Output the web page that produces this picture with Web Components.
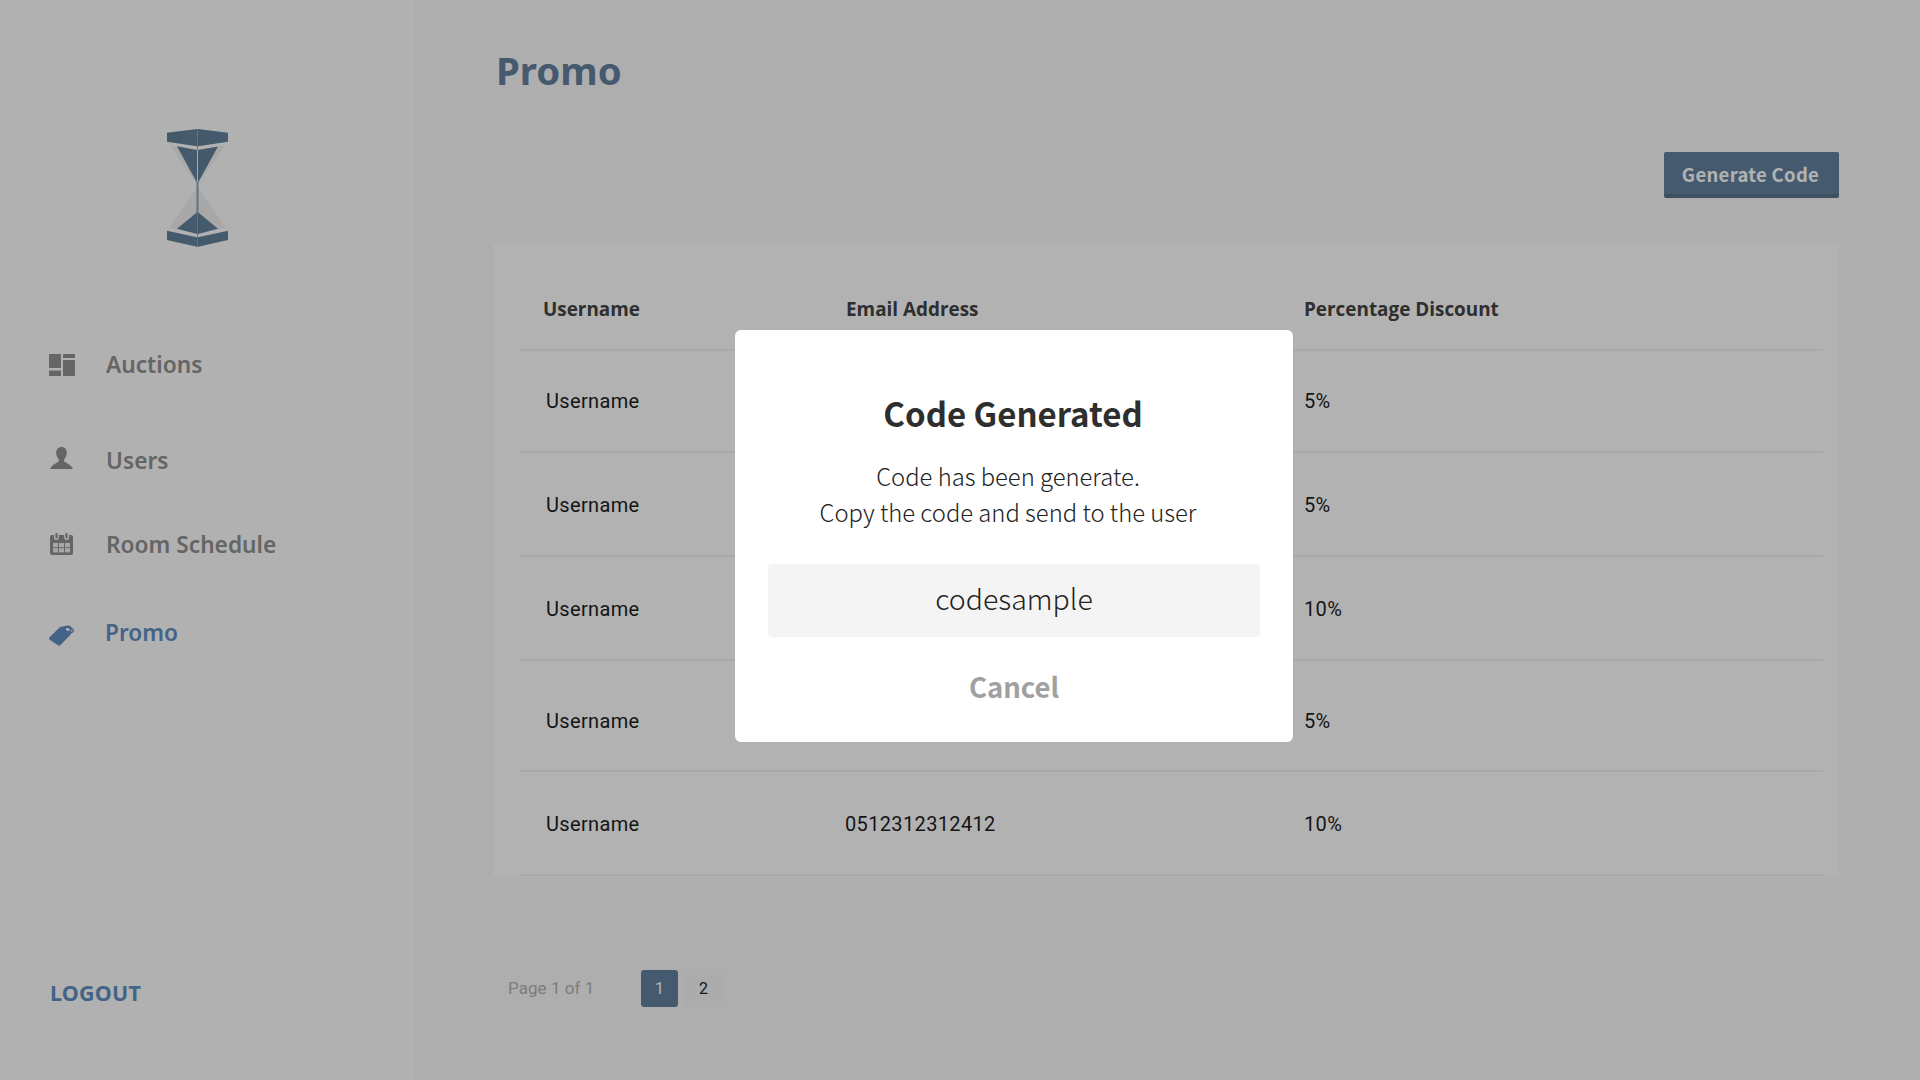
<!DOCTYPE html>
<html><head><meta charset="utf-8">
<style>
html,body{margin:0;padding:0;width:1920px;height:1080px;overflow:hidden;background:#f9f9f9}
body{font-family:"Noto Sans",sans-serif}
</style></head><body>
<promo-app></promo-app>
<template id="t-app"><style>
:host{display:grid;grid-template-columns:414px 1fr;width:1920px;height:1080px;position:relative}
</style><side-bar></side-bar><main-panel></main-panel><code-modal></code-modal></template>

<template id="t-side"><style>
:host{display:flex;flex-direction:column;background:#fefefe;height:1080px;padding:129px 0 0 0;box-sizing:border-box}
.logo{align-self:flex-start;margin-left:167px;height:120px;display:block}
nav{display:flex;flex-direction:column;margin:100px 0 0 49px}
.spacer{flex:1}
.logout{margin:0 0 71px 50px;font:700 21.500px/32px "Noto Sans",sans-serif;color:#6190c2;letter-spacing:.2px}
</style>
<svg class="logo" width="61" height="120" viewBox="0 0 61 120">
<defs><linearGradient id="g" x1="0" x2="1"><stop offset="0" stop-color="#5f8198"/><stop offset="1" stop-color="#66839f"/></linearGradient></defs>
<polygon points="0,12 61,12 30.500,56" fill="#f1f1f1"/>
<polygon points="30.500,58 61,102 0,102" fill="#f1f1f1"/>
<polygon points="0,12.700 30,17.300 31,17.300 61,12.700 61,16 31,21 30,21 0,16" fill="#fefefe"/>
<polygon points="0,98 30,105 31,105 61,98 61,101.700 31,108.300 30,108.300 0,101.700" fill="#fefefe"/>
<polygon points="0,3.700 30,0 30,17.300 0,12.700" fill="url(#g)"/><polygon points="31,0 61,3.700 61,12.700 31,17.300" fill="url(#g)"/>
<polygon points="10,17.300 30,21 30,53.700" fill="url(#g)"/><polygon points="31,21 51,17.500 31,53.700" fill="url(#g)"/>
<rect x="29.500" y="53" width="2" height="31" fill="#8aa4ba"/>
<polygon points="30,83.300 30,105 10,99.700" fill="url(#g)"/><polygon points="31,83.300 51,99.700 31,105" fill="url(#g)"/>
<polygon points="0,101.700 30,108.300 30,117.700 0,111" fill="url(#g)"/><polygon points="31,108.300 61,101.700 61,111 31,117.700" fill="url(#g)"/>
<rect x="30" y="0" width="1" height="21" fill="#8aa4ba"/><rect x="30" y="84" width="1" height="34" fill="#8aa4ba"/>
</svg>
<nav>
<nav-item h="96" label="Auctions"><svg slot="icon" width="26" height="22" viewBox="0 0 26 22" fill="#919191"><path d="M0 0h12v14H0zM0 16.500h12V22H0zM14 0h12v4H14zM14 6h12v16H14z"/></svg></nav-item>
<nav-item h="84" label="Users"><svg slot="icon" style="margin:0 0 6px 1px" width="23" height="22" viewBox="0 0 23 22" fill="#919191"><path d="M11.500 0c3.300 0 5.300 2.300 5.300 5.700 0 2.800-1.200 5-2.600 6.500v2.200c1.800 1.500 6.200 2.500 8.800 7.600H0c2.600-5.100 7-6.100 8.800-7.600v-2.200C7.400 10.700 6.200 8.500 6.200 5.700 6.200 2.300 8.200 0 11.500 0z"/></svg></nav-item>
<nav-item h="88" label="Room Schedule"><svg slot="icon" style="margin:0 0 2px 1px" width="23" height="22" viewBox="0 0 23 22"><path fill="#919191" d="M2 2h2v2.700a2.400 2.400 0 0 0 4.800 0V2h5.400v2.700a2.400 2.400 0 0 0 4.800 0V2h2a2 2 0 0 1 2 2v16a2 2 0 0 1-2 2H2a2 2 0 0 1-2-2V4a2 2 0 0 1 2-2z"/><rect x="5.400" y="0" width="2.200" height="5.600" rx="1.100" fill="#919191"/><rect x="15.400" y="0" width="2.200" height="5.600" rx="1.100" fill="#919191"/><g fill="#f0f0f0"><rect x="3" y="10" width="5" height="4.200"/><rect x="9" y="10" width="5" height="4.200"/><rect x="15" y="10" width="5" height="4.200"/><rect x="3" y="15.200" width="5" height="4.200"/><rect x="9" y="15.200" width="5" height="4.200"/><rect x="15" y="15.200" width="5" height="4.200"/></g></svg></nav-item>
<nav-item h="40" active label="Promo" shift><svg slot="icon" style="margin-top:5px" width="26" height="21" viewBox="0 0 26 21"><path fill="#6190c2" d="M.6 12.300 10.300 2.700c.5-.5 1.100-.8 1.800-.9L18.500.6c2-.3 3.600.8 4.300 2.500l-1 6.300L11.500 19.900c-.9.900-2 1-2.900.2L.6 14.700c-.8-.7-.8-1.600 0-2.400z"/><ellipse cx="20.500" cy="5" rx="3.900" ry="2.300" transform="rotate(20 20.500 5)" fill="none" stroke="#6190c2" stroke-width="1.300"/><ellipse cx="18.800" cy="4.500" rx="2.200" ry="1.300" transform="rotate(20 18.800 4.500)" fill="#fefefe"/></svg></nav-item>
</nav>
<div class="spacer"></div>
<div class="logout">LOGOUT</div></template>

<template id="t-nav"><style>
:host{display:flex;align-items:flex-start;gap:30px}
.i{width:27px;height:32px;display:flex;align-items:center;flex:none}
.l{font:600 22.700px/32px "Noto Sans",sans-serif;color:#919191}
:host([active]) .l{color:#6190c2;margin-left:-1px}
</style><span class="i"><slot name="icon"></slot></span><span class="l"></span></template>

<template id="t-main"><style>
:host{display:flex;flex-direction:column;padding:0 81px 0 82px;background:#f9f9f9;height:1080px;box-sizing:border-box}
h1{margin:44px 0 0;font:700 38.400px/52px "Noto Sans",sans-serif;color:#63829e}
.bar{display:flex;justify-content:flex-end;margin-top:56px;height:46px}
.btn{display:flex;align-items:center;justify-content:center;width:175px;height:46px;box-sizing:border-box;background:#63829e;border-bottom:4px solid #587389;border-radius:2px;color:#fff;font:700 18.500px/24px "Noto Sans CJK JP",sans-serif;letter-spacing:.3px;padding:2px 2px 0 0}
.card{margin:45px 0 0 -3px;background:#fff;padding:0 16px 0 26px;width:1346px;box-sizing:border-box;height:634px}
.pager{display:flex;align-items:center;margin:93px 0 0 12px;gap:7px}
.p{font:400 17px/37px Roboto,sans-serif;color:#b4b4b4;width:126px;letter-spacing:.05px}
.n{width:37px;height:37px;border-radius:3px;display:flex;align-items:center;justify-content:center;font:400 16px Roboto,sans-serif;color:#222;background:#f7f7f7}
.n.on{background:#63829e;color:#fff}
</style>
<h1>Promo</h1>
<div class="bar"><div class="btn">Generate Code</div></div>
<div class="card">
<table-row head h="108" a="Username" b="Email Address" c="Percentage Discount"></table-row>
<table-row first h="102" a="Username" b="" c="5%"></table-row>
<table-row h="104" a="Username" b="" c="5%"></table-row>
<table-row h="104" a="Username" b="" c="10%"></table-row>
<table-row h="111" low a="Username" b="" c="5%"></table-row>
<table-row h="104" a="Username" b="0512312312412" c="10%"></table-row>
</div>
<div class="pager"><span class="p">Page 1 of 1</span><span class="n on">1</span><span class="n">2</span></div></template>

<template id="t-row"><style>
:host{display:grid;grid-template-columns:299px 459px 1fr;align-items:center;box-sizing:border-box;border-bottom:2px solid #f2f2f2;font:400 20px/28px Roboto,sans-serif;color:#1e1e1e;padding-left:27px;padding-top:1px;letter-spacing:.35px}
:host([first]){padding-top:0}
:host([low]){padding-top:11px}
:host([head]){grid-template-columns:303px 458px 1fr;font:700 18.900px/28px "Open Sans",sans-serif;color:#444;padding-left:24px;padding-top:26px;letter-spacing:0}
</style><span class="a"></span><span class="b"></span><span class="c"></span></template>

<template id="t-modal"><style>
:host{position:absolute;inset:0;background:rgba(0,0,0,.3);display:flex;align-items:flex-start;justify-content:flex-start}
.m{width:558px;margin:330px 0 0 735px;height:412px;box-sizing:border-box;background:#fff;border-radius:6px;padding:0 33px;text-align:center;color:#333;font-family:"Noto Sans CJK JP",sans-serif;display:flex;flex-direction:column;align-items:stretch}
h2{margin:0;padding:58px 2px 0 0;font:700 33px/50px "Noto Sans CJK JP",sans-serif;color:#2e2e2e}
p{margin:20px 12px 0 0;font:300 23.800px/36px "Noto Sans CJK JP",sans-serif;color:#222}
.code{margin-top:34px;height:73px;background:#f4f4f4;border-radius:4px;font:300 28.500px/67px "Noto Sans CJK JP",sans-serif;color:#222}
.cancel{margin-top:24px;font:700 27.500px/50px "Noto Sans CJK JP",sans-serif;color:#a0a0a0}
</style><div class="m"><h2>Code Generated</h2><p>Code has been generate.<br>Copy the code and send to the user</p><div class="code">codesample</div><div class="cancel">Cancel</div></div></template>

<script>
function mk(id){return class extends HTMLElement{constructor(){super();this.attachShadow({mode:'open'}).appendChild(document.getElementById(id).content.cloneNode(true));}}}
customElements.define('promo-app',mk('t-app'));
customElements.define('side-bar',mk('t-side'));
customElements.define('main-panel',mk('t-main'));
customElements.define('code-modal',mk('t-modal'));
customElements.define('nav-item',class extends mk('t-nav'){connectedCallback(){this.shadowRoot.querySelector('.l').textContent=this.getAttribute('label');this.style.height=this.getAttribute('h')+'px';}});
customElements.define('table-row',class extends mk('t-row'){connectedCallback(){for(const k of 'abc')this.shadowRoot.querySelector('.'+k).textContent=this.getAttribute(k);this.style.height=this.getAttribute('h')+'px';}});
</script>
</body></html>
